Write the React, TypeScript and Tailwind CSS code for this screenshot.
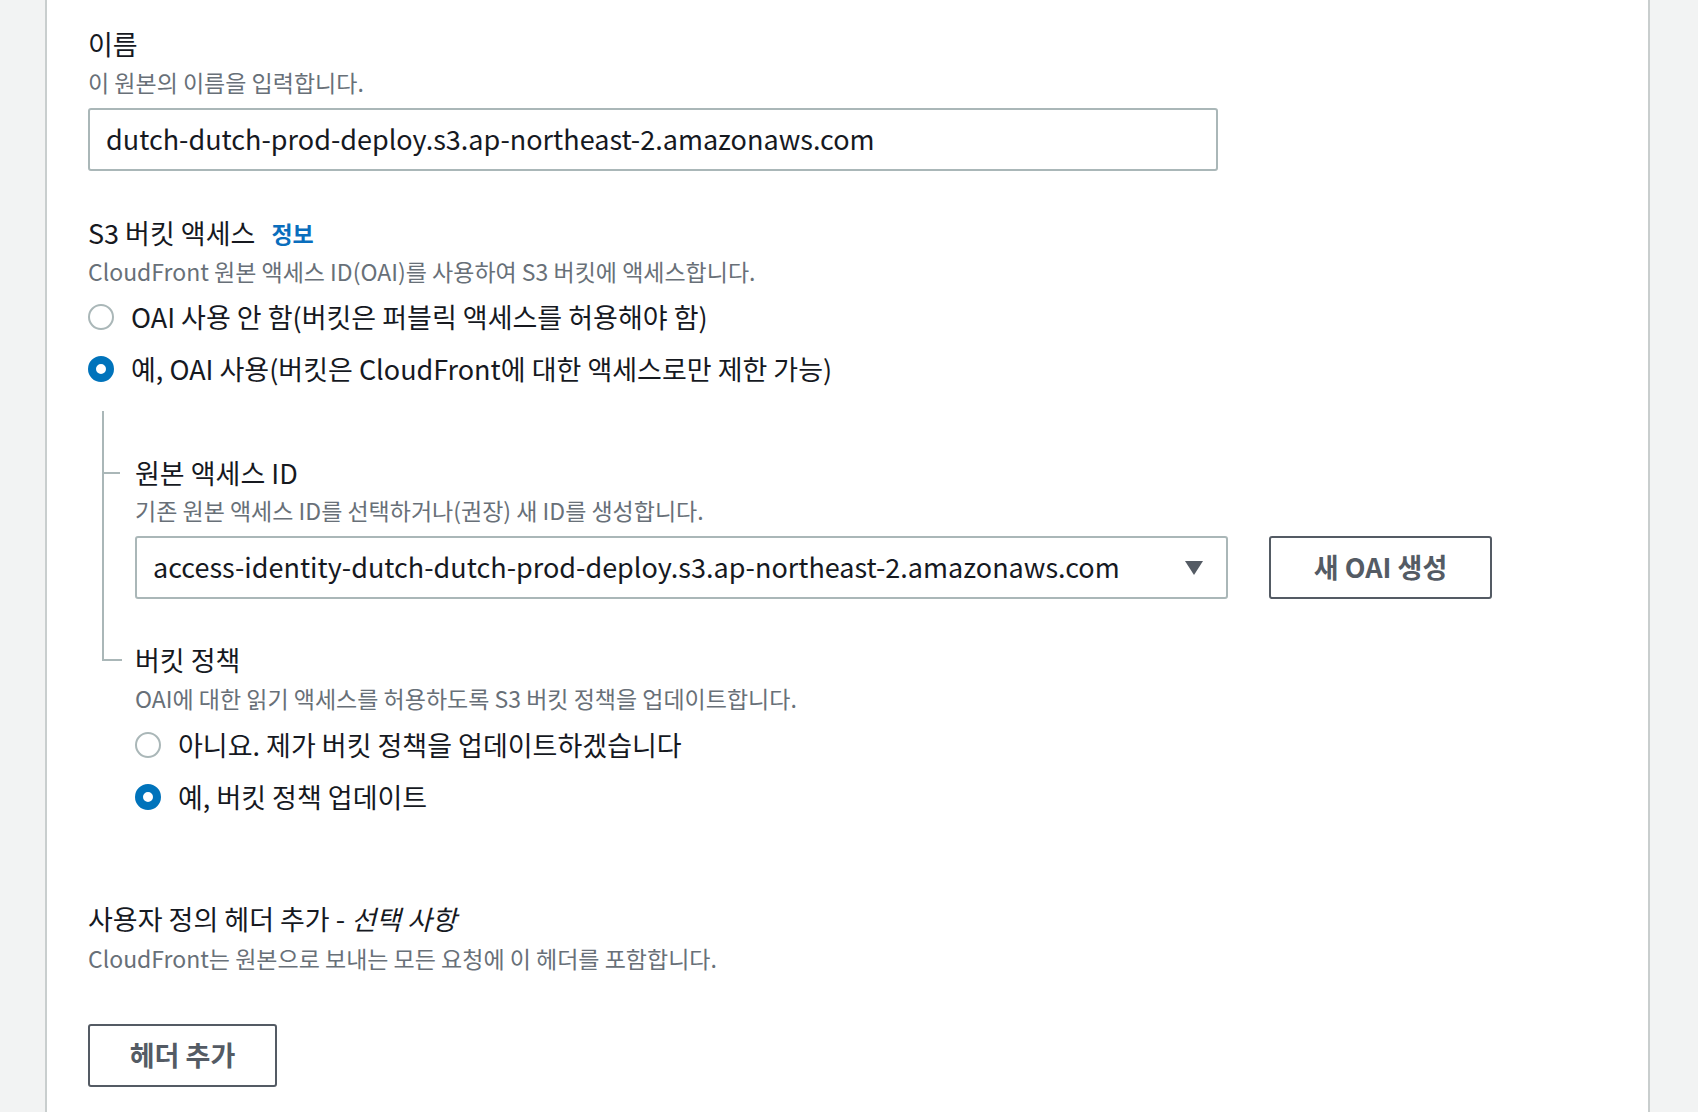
import React from "react";

const font = "font-['Noto_Sans_CJK_KR','Noto_Sans',sans-serif]";

function Radio({ checked, label }: { checked?: boolean; label: string }) {
  return (
    <div className="flex items-center h-[40px]">
      {checked ? (
        <span className="w-[26px] h-[26px] rounded-full border-[8px] border-[#0073bb] bg-white shrink-0" />
      ) : (
        <span className="w-[26px] h-[26px] rounded-full border-2 border-[#aab7b8] bg-white shrink-0" />
      )}
      <span className="ml-[17px] text-[27px] leading-[40px] text-[#16191f]">{label}</span>
    </div>
  );
}

function Label({ children }: { children: React.ReactNode }) {
  return <div className="text-[27px] leading-[40px] text-[#16191f]">{children}</div>;
}

function Desc({ children }: { children: React.ReactNode }) {
  return <div className="text-[23px] leading-[34px] text-[#687078]">{children}</div>;
}

export default function App() {
  return (
    <div className={`min-h-screen bg-[#f2f3f3] ${font}`}>
      <div className="ml-[45px] w-[1605px] min-h-[1112px] bg-white border-x-2 border-[#c9cece] pl-[41px] pt-[24px] pb-[40px]">
        {/* 이름 */}
        <Label>이름</Label>
        <div className="mt-px">
          <Desc>이 원본의 이름을 입력합니다.</Desc>
        </div>
        <div className="mt-[9px] w-[1130px] h-[63px] border-2 border-[#aab7b8] rounded-[3px] flex items-center px-[16px] text-[27px] text-[#16191f]">
          dutch-dutch-prod-deploy.s3.ap-northeast-2.amazonaws.com
        </div>

        {/* S3 버킷 액세스 */}
        <div className="mt-[42px] flex items-center">
          <Label>S3 버킷 액세스</Label>
          <span className="ml-[16px] text-[23px] leading-[40px] font-bold text-[#0a6ebd]">정보</span>
        </div>
        <div className="mt-px">
          <Desc>CloudFront 원본 액세스 ID(OAI)를 사용하여 S3 버킷에 액세스합니다.</Desc>
        </div>
        <div className="mt-[9px] flex flex-col gap-[12px]">
          <Radio label="OAI 사용 안 함(버킷은 퍼블릭 액세스를 허용해야 함)" />
          <Radio checked label="예, OAI 사용(버킷은 CloudFront에 대한 액세스로만 제한 가능)" />
        </div>

        {/* tree */}
        <div className="mt-[22px] ml-[14px]">
          <div className="border-l-2 border-[#aab7b8] pl-[31px] pt-[42px] pb-[41px]">
            <div className="flex items-center">
              <span className="-ml-[33px] mr-[15px] w-[18px] h-[2px] bg-[#aab7b8] shrink-0" />
              <Label>원본 액세스 ID</Label>
            </div>
            <Desc>기존 원본 액세스 ID를 선택하거나(권장) 새 ID를 생성합니다.</Desc>
            <div className="mt-[9px] flex items-center gap-[41px]">
              <div className="w-[1093px] h-[63px] border-2 border-[#aab7b8] rounded-[3px] flex items-center justify-between pl-[16px] pr-[22px] text-[27px] text-[#16191f]">
                <span>access-identity-dutch-dutch-prod-deploy.s3.ap-northeast-2.amazonaws.com</span>
                <svg width="20" height="16" viewBox="0 0 20 16">
                  <path d="M1 1 H19 L10 15 Z" fill="#545b64" />
                </svg>
              </div>
              <button className="w-[223px] h-[63px] border-2 border-[#545b64] rounded-[3px] text-[27px] font-bold text-[#545b64]">
                새 OAI 생성
              </button>
            </div>
          </div>
          <div className="flex">
            <div className="w-[20px] h-[21px] border-l-2 border-b-2 border-[#aab7b8] shrink-0" />
            <div className="ml-[13px]">
              <Label>버킷 정책</Label>
              <div className="mt-px">
                <Desc>OAI에 대한 읽기 액세스를 허용하도록 S3 버킷 정책을 업데이트합니다.</Desc>
              </div>
              <div className="mt-[10px] flex flex-col gap-[12px]">
                <Radio label="아니요. 제가 버킷 정책을 업데이트하겠습니다" />
                <Radio checked label="예, 버킷 정책 업데이트" />
              </div>
            </div>
          </div>
        </div>

        {/* 사용자 정의 헤더 */}
        <div className="mt-[82px]">
          <Label>
            사용자 정의 헤더 추가 - <i>선택 사항</i>
          </Label>
        </div>
        <div className="mt-[2px]">
          <Desc>CloudFront는 원본으로 보내는 모든 요청에 이 헤더를 포함합니다.</Desc>
        </div>
        <button className="mt-[49px] w-[189px] h-[63px] border-2 border-[#545b64] rounded-[3px] text-[27px] font-bold text-[#545b64]">
          헤더 추가
        </button>
      </div>
    </div>
  );
}
